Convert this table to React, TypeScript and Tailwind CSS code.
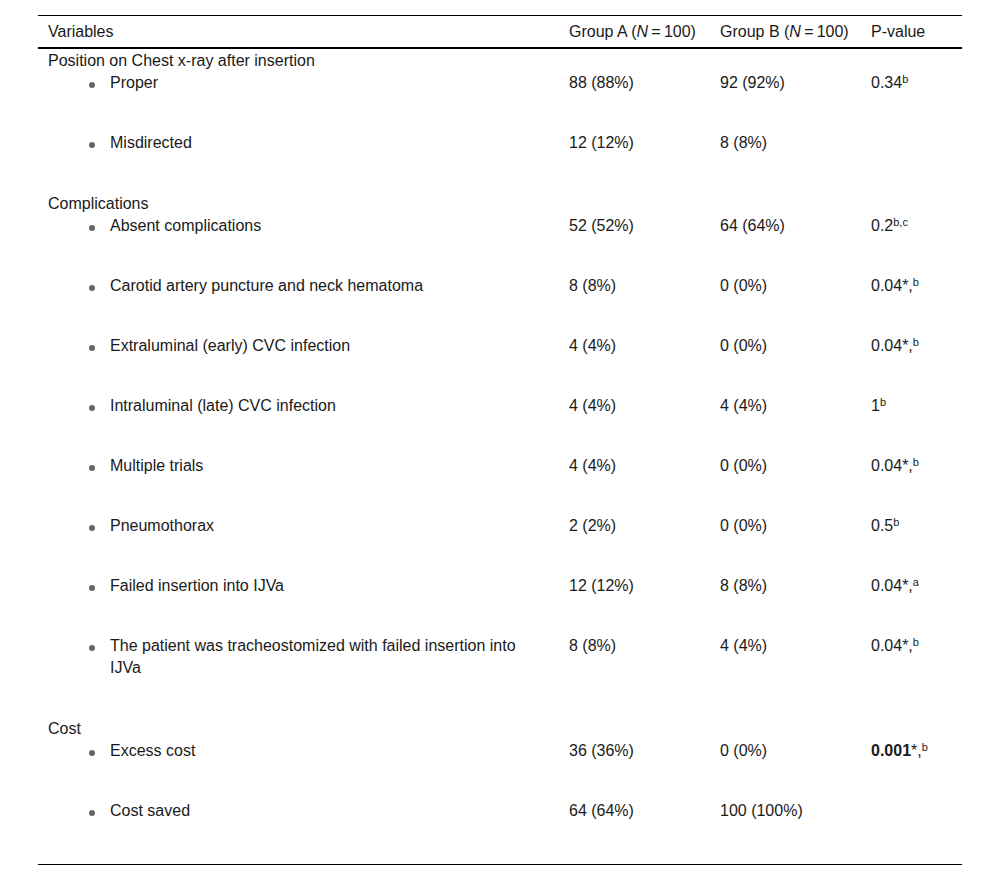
import React from 'react'

type Item = {
  label: string
  a: string
  b: string
  p?: React.ReactNode
}

type Section = {
  title: string
  items: Item[]
}

const Sup = ({ children }: { children: React.ReactNode }) => (
  <sup className="text-[11px]">{children}</sup>
)

const sections: Section[] = [
  {
    title: 'Position on Chest x-ray after insertion',
    items: [
      { label: 'Proper', a: '88 (88%)', b: '92 (92%)', p: <>0.34<Sup>b</Sup></> },
      { label: 'Misdirected', a: '12 (12%)', b: '8 (8%)' },
    ],
  },
  {
    title: 'Complications',
    items: [
      { label: 'Absent complications', a: '52 (52%)', b: '64 (64%)', p: <>0.2<Sup>b,c</Sup></> },
      { label: 'Carotid artery puncture and neck hematoma', a: '8 (8%)', b: '0 (0%)', p: <>0.04*,<Sup>b</Sup></> },
      { label: 'Extraluminal (early) CVC infection', a: '4 (4%)', b: '0 (0%)', p: <>0.04*,<Sup>b</Sup></> },
      { label: 'Intraluminal (late) CVC infection', a: '4 (4%)', b: '4 (4%)', p: <>1<Sup>b</Sup></> },
      { label: 'Multiple trials', a: '4 (4%)', b: '0 (0%)', p: <>0.04*,<Sup>b</Sup></> },
      { label: 'Pneumothorax', a: '2 (2%)', b: '0 (0%)', p: <>0.5<Sup>b</Sup></> },
      { label: 'Failed insertion into IJVa', a: '12 (12%)', b: '8 (8%)', p: <>0.04*,<Sup>a</Sup></> },
      {
        label: 'The patient was tracheostomized with failed insertion into IJVa',
        a: '8 (8%)',
        b: '4 (4%)',
        p: <>0.04*,<Sup>b</Sup></>,
      },
    ],
  },
  {
    title: 'Cost',
    items: [
      { label: 'Excess cost', a: '36 (36%)', b: '0 (0%)', p: <><b>0.001</b>*,<Sup>b</Sup></> },
      { label: 'Cost saved', a: '64 (64%)', b: '100 (100%)' },
    ],
  },
]

const cols = 'grid grid-cols-[521px_151px_151px_101px]'

export default function App() {
  return (
    <div className="min-h-[880px] bg-white pt-[15px] px-[38px] font-['Liberation_Sans',Arial,sans-serif] text-[16px] text-[#1a1a1a]">
      <div className="w-[924px] border-t border-b border-black">
        {/* header */}
        <div className={`${cols} h-[33px] items-center border-b-2 border-black leading-[22px]`}>
          <div className="pl-[10px]">Variables</div>
          <div className="pl-[10px]">
            Group A (<i>N</i>{'\u2009'}={'\u2009'}100)
          </div>
          <div className="pl-[10px]">
            Group B (<i>N</i>{'\u2009'}={'\u2009'}100)
          </div>
          <div className="pl-[10px]">P-value</div>
        </div>

        <div className="pb-[4px]">
          {sections.map((s) => (
            <div key={s.title}>
              <div className="pl-[10px] leading-[23px]">{s.title}</div>
              {s.items.map((it) => (
                <div key={it.label} className={`${cols} pb-[38px] leading-[22px]`}>
                  <div className="flex pl-[51px] pr-[20px]">
                    <span className="mt-[10px] mr-[15px] h-[6px] w-[6px] shrink-0 rounded-full bg-[#666]" />
                    <span>{it.label}</span>
                  </div>
                  <div className="pl-[10px]">{it.a}</div>
                  <div className="pl-[10px]">{it.b}</div>
                  <div className="pl-[10px]">{it.p}</div>
                </div>
              ))}
            </div>
          ))}
        </div>
      </div>
    </div>
  )
}
